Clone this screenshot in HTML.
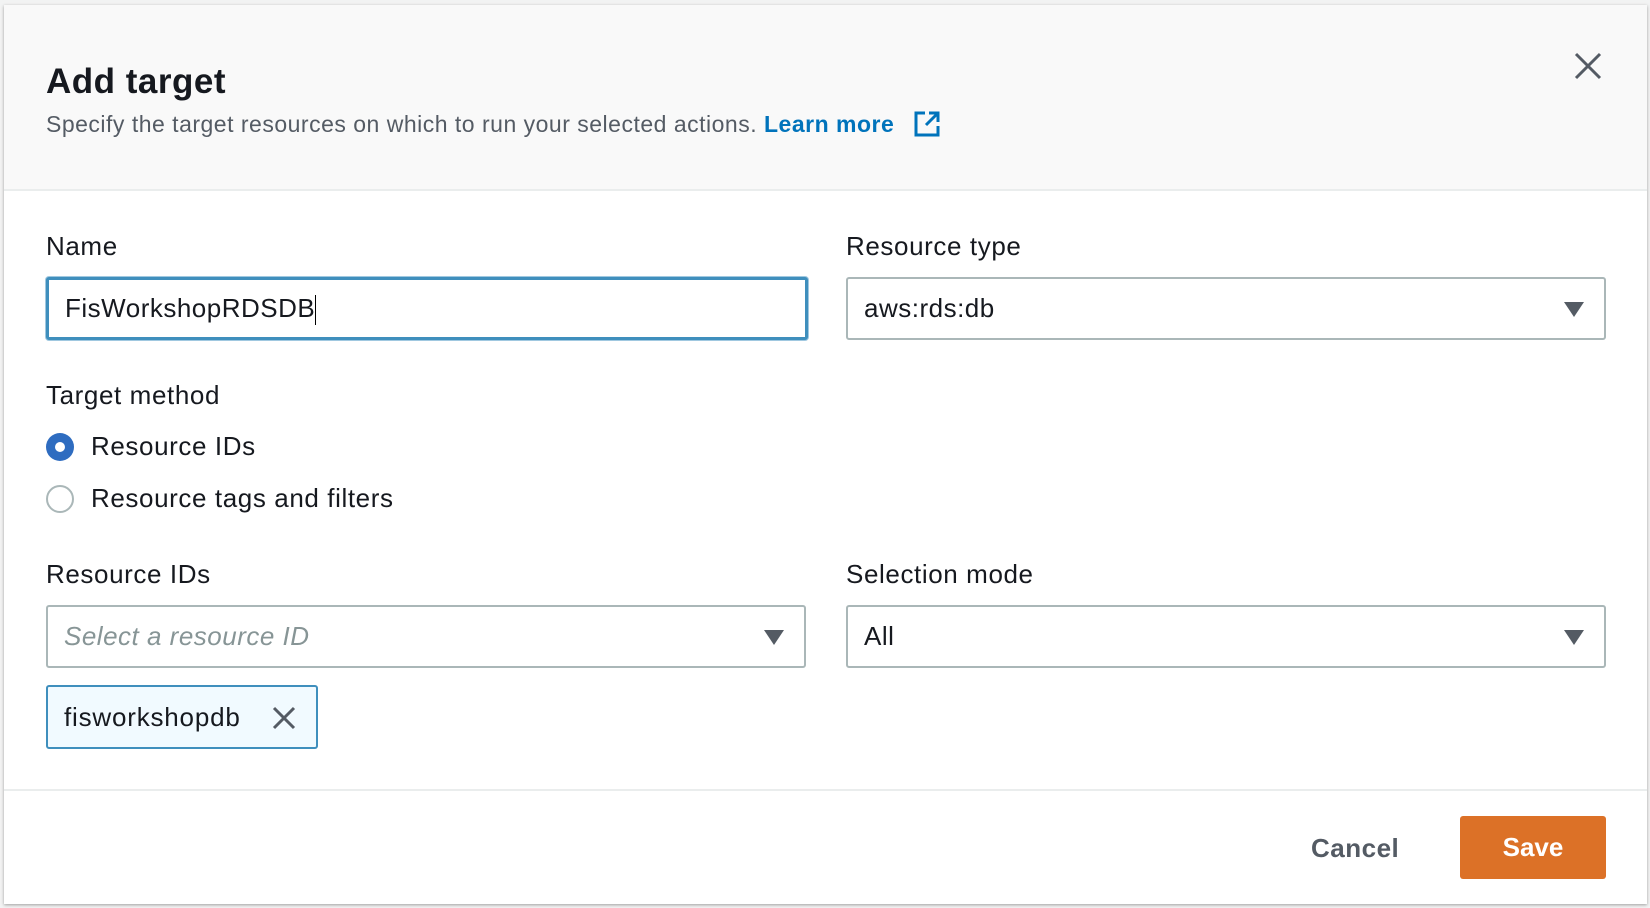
<!DOCTYPE html>
<html><head><style>
*{margin:0;padding:0;box-sizing:border-box}
body{width:1650px;height:908px;background:#f2f3f3;font-family:"Liberation Sans",sans-serif;color:#16191f;position:relative;overflow:hidden}
.modal{position:absolute;left:4px;top:5px;width:1643px;height:899px;background:#fff;box-shadow:0 1px 3px rgba(0,0,0,.35)}
.hdr{position:absolute;left:0;top:0;width:100%;height:186px;background:#f9f9f9;border-bottom:2px solid #eaeded}
.a{position:absolute;white-space:nowrap}
.lbl{font-size:26px;letter-spacing:0.6px;color:#16191f}
.inp{position:absolute;height:63px;border:2px solid #aab7b8;border-radius:3px;background:#fff;font-size:26px;letter-spacing:0.5px;line-height:59px;padding-left:16px}
.arr{position:absolute;right:20px;top:23px;width:0;height:0;border-left:10px solid transparent;border-right:10px solid transparent;border-top:15px solid #545b64}
.radio{position:absolute;width:28px;height:28px;border-radius:50%}
</style></head><body>
<div class="modal">
<div class="hdr"></div>
<div class="a" style="left:42px;top:57px;font-size:35px;font-weight:bold;letter-spacing:0.5px">Add target</div>
<div class="a" style="left:42px;top:105px;font-size:23px;letter-spacing:0.5px;color:#545b64">Specify the target resources on which to run your selected actions. <b style="color:#0073bb">Learn more</b>
<svg style="vertical-align:-6px;margin-left:12px" width="28" height="28" viewBox="0 0 28 28"><path d="M12 3H3v22h22v-9" fill="none" stroke="#0073bb" stroke-width="3"/><path d="M16 3h9v9M25 3L13 15" fill="none" stroke="#0073bb" stroke-width="3"/></svg></div>
<svg class="a" style="left:1570px;top:47px" width="28" height="28" viewBox="0 0 28 28"><path d="M2 2L26 26M26 2L2 26" stroke="#545b64" stroke-width="3"/></svg>

<div class="a lbl" style="left:42px;top:226px">Name</div>
<div class="inp" style="left:42px;top:272px;width:762px;border-color:#3f8fbd;border-width:3px;line-height:57px;box-shadow:0 0 0 1px #a0c8e0">FisWorkshopRDSDB<span style="display:inline-block;width:1px;height:30px;background:#000;vertical-align:middle"></span></div>
<div class="a lbl" style="left:842px;top:226px">Resource type</div>
<div class="inp" style="left:842px;top:272px;width:760px">aws:rds:db<div class="arr"></div></div>

<div class="a lbl" style="left:42px;top:375px">Target method</div>
<div class="radio" style="left:42px;top:428px;background:#2e6cc0"><div style="position:absolute;left:9px;top:9px;width:10px;height:10px;border-radius:50%;background:#fff"></div></div>
<div class="a lbl" style="left:87px;top:426px">Resource IDs</div>
<div class="radio" style="left:42px;top:480px;border:2px solid #aab7b8"></div>
<div class="a lbl" style="left:87px;top:478px">Resource tags and filters</div>

<div class="a lbl" style="left:42px;top:554px">Resource IDs</div>
<div class="inp" style="left:42px;top:600px;width:760px;color:#879596;font-style:italic">Select a resource ID<div class="arr"></div></div>
<div class="a lbl" style="left:842px;top:554px">Selection mode</div>
<div class="inp" style="left:842px;top:600px;width:760px">All<div class="arr"></div></div>
<div class="inp" style="left:42px;top:680px;width:272px;height:64px;border-color:#3f8fbd;background:#f1faff;line-height:60px;letter-spacing:0.8px">fisworkshopdb
<svg style="position:absolute;left:224px;top:19px" width="24" height="24" viewBox="0 0 24 24"><path d="M2 2L22 22M22 2L2 22" stroke="#545b64" stroke-width="3"/></svg></div>

<div class="a" style="left:0;top:784px;width:100%;height:2px;background:#eaeded"></div>
<div class="a" style="left:1307px;top:828px;font-size:26px;font-weight:bold;letter-spacing:0.5px;color:#545b64">Cancel</div>
<div class="a" style="left:1456px;top:811px;width:146px;height:63px;background:#dc7127;border-radius:3px;color:#fff;font-size:26px;font-weight:bold;text-align:center;line-height:63px">Save</div>
</div>
</body></html>
